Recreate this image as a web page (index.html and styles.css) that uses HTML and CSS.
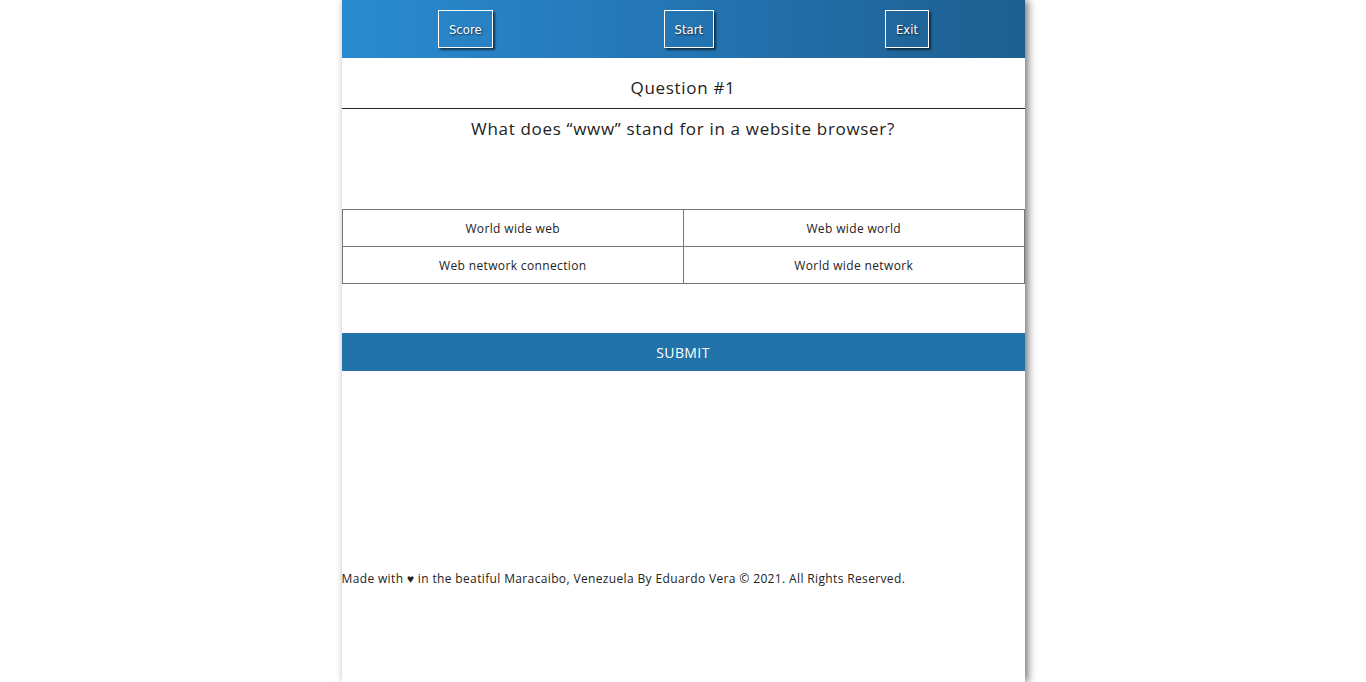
FILE: index.html
```html
<!DOCTYPE html>
<html lang="en">
<head>
<meta charset="utf-8">
<title>Quiz</title>
<link rel="stylesheet" href="styles.css">
</head>
<body>
<div class="app">
  <header class="topbar">
    <button class="nav-btn">Score</button>
    <button class="nav-btn">Start</button>
    <button class="nav-btn">Exit</button>
  </header>
  <h1 class="q-title">Question #1</h1>
  <div class="q-text">What does “www” stand for in a website browser?</div>
  <div class="options">
    <div class="option">World wide web</div>
    <div class="option">Web wide world</div>
    <div class="option">Web network connection</div>
    <div class="option">World wide network</div>
  </div>
  <div class="submit">SUBMIT</div>
  <footer class="footer">Made with ♥ in the beatiful Maracaibo, Venezuela By Eduardo Vera © 2021. All Rights Reserved.</footer>
</div>
</body>
</html>
```
FILE: styles.css
```css
html, body {
  margin: 0;
  padding: 0;
  background: #fff;
}
body {
  font-family: "Open Sans", "Liberation Sans", sans-serif;
  color: #222;
}
.app {
  width: 683px;
  margin: 0 auto;
  min-height: 100vh;
  background: #fff;
  box-shadow: 3px 0 8px rgba(0,0,0,0.55);
}
.topbar {
  height: 58px;
  box-sizing: border-box;
  padding: 0 10px 0 11px;
  display: flex;
  align-items: center;
  justify-content: space-around;
  background: linear-gradient(to right, #2a8bd0, #2370ad 60%, #1d5f8f);
}
.nav-btn {
  height: 38px;
  padding: 0 10px;
  border: 1px solid #fff;
  background: transparent;
  color: #fff;
  font-family: "DejaVu Sans Condensed", "Open Sans", sans-serif;
  font-size: 13px;
  text-shadow: 1px 1px 2px rgba(0,0,0,0.7);
  box-shadow: 2px 2px 2px rgba(0,0,0,0.6);
}
.q-title {
  margin: 0;
  height: 51px;
  box-sizing: border-box;
  padding-top: 17px;
  border-bottom: 1px solid #222;
  text-align: center;
  font-size: 17px;
  font-weight: 400;
  letter-spacing: 0.04em;
  line-height: 26px;
}
.q-text {
  height: 100px;
  box-sizing: border-box;
  padding-top: 8px;
  text-align: center;
  font-size: 17px;
  font-weight: 400;
  letter-spacing: 0.04em;
  line-height: 24px;
}
.options {
  display: grid;
  grid-template-columns: 1fr 1fr;
}
.option {
  height: 38px;
  box-sizing: border-box;
  border: 1px solid #777;
  margin: 0 0 -1px 0;
  display: flex;
  align-items: center;
  justify-content: center;
  font-size: 12px;
  font-weight: 400;
  letter-spacing: 0.03em;
}
.option:nth-child(odd) { margin-right: -1px; }
.submit {
  margin-top: 50px;
  height: 38px;
  background: #2373ab;
  color: #fff;
  display: flex;
  align-items: center;
  justify-content: center;
  font-size: 14px;
  font-weight: 400;
  letter-spacing: 0.03em;
}
.footer {
  margin-top: 199px;
  font-size: 12px;
  font-weight: 400;
  letter-spacing: 0.03em;
  line-height: 18px;
}
```
